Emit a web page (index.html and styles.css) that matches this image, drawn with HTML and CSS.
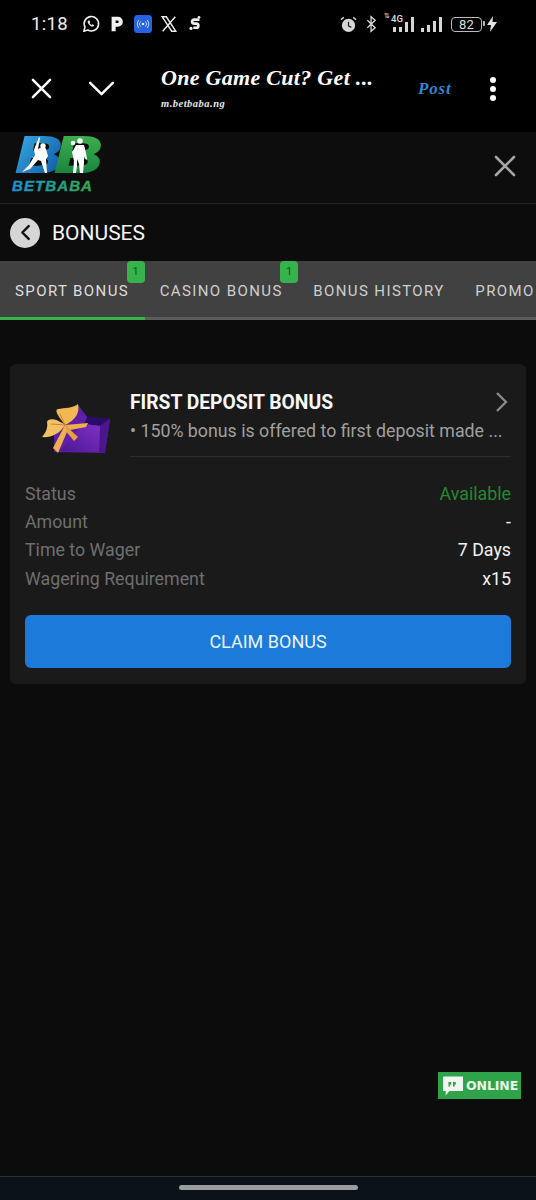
FILE: index.html
```html
<!DOCTYPE html>
<html lang="en">
<head>
<meta charset="utf-8">
<title>Bonuses</title>
<link rel="stylesheet" href="styles.css">
</head>
<body>
<div class="screen">
  <div class="status">
    <span class="time">1:18</span>
    <div class="status-left">
      <svg class="si" viewBox="0 0 20 20"><path d="M2 18l1.300-4.600A8 8 0 1 1 6.500 16.700z" fill="none" stroke="#eee" stroke-width="1.800" stroke-linejoin="round"/><path d="M7 6c-1 .9-.9 2.100.3 3.900 1.300 1.800 2.900 2.900 4.300 3 1 0 1.800-.6 1.900-1.500l-1.900-1.100-.9.9c-1-.5-1.800-1.300-2.300-2.300l.8-.9-.9-2z" fill="#eee"/></svg>
      <svg class="si" viewBox="0 0 20 20"><path d="M4 2h7a5.500 5.500 0 0 1 0 11H8.500v5H4zM8.500 6v3H10.500a1.500 1.500 0 0 0 0-3z" fill="#f2f2f2" fill-rule="evenodd"/></svg>
      <svg class="si si-blue" viewBox="0 0 18 18"><rect width="18" height="18" rx="3.500" fill="#2762e0"/><circle cx="9" cy="9" r="1.300" fill="#cfe"/><path d="M6.500 6.500a3.500 3.500 0 0 0 0 5M11.500 6.500a3.500 3.500 0 0 1 0 5M4.800 5a6 6 0 0 0 0 8M13.200 5a6 6 0 0 1 0 8" fill="none" stroke="#c9d8ff" stroke-width=".9"/></svg>
      <svg class="si" viewBox="0 0 20 20"><path d="M2.500 2h4.500l10.500 16H13zM17 2L3 18" fill="none" stroke="#eee" stroke-width="1.600"/></svg>
      <svg class="si si-s" viewBox="0 0 14 18"><path d="M12 4H6a2.300 2.300 0 0 0 0 4.600h2.500a2.300 2.300 0 0 1 0 4.600H5" fill="none" stroke="#eee" stroke-width="3"/><circle cx="2.500" cy="14" r="1.800" fill="#eee"/><circle cx="11.500" cy="1.500" r="1.500" fill="#eee"/></svg>
    </div>
    <div class="status-right">
      <svg class="sr-alarm" viewBox="0 0 18 18"><circle cx="9" cy="10" r="7" fill="#d8d8d8"/><path d="M9 6v4.500l3 1.500" fill="none" stroke="#222" stroke-width="1.300"/><path d="M1 4l3-2.500M17 4l-3-2.500" stroke="#d8d8d8" stroke-width="1.500"/></svg>
      <svg class="sr-bt" viewBox="0 0 12 18"><path d="M1.500 5l8.500 8-4.500 4V1l4.500 4-8.500 8" fill="none" stroke="#ddd" stroke-width="1.400"/></svg>
      <div class="signal-wrap">
        <span class="updown">⇅</span>
        <span class="four-g">4G</span>
        <span class="bars"><i class="s1"></i><i class="s2"></i><i class="s3"></i><i class="s4"></i></span>
      </div>
      <span class="bars bars-2"><i class="b1"></i><i class="b2"></i><i class="b3"></i><i class="b4"></i></span>
      <span class="battery">82</span>
      <svg class="bolt" viewBox="0 0 10 16"><path d="M6 0L0 9h4l-1 7 7-10H5.500z" fill="#e4e4e4"/></svg>
    </div>
  </div>

  <div class="appbar">
    <svg class="ab-x" viewBox="0 0 22 22"><path d="M2 2l18 18M20 2L2 20" stroke="#fff" stroke-width="2.600" stroke-linecap="round"/></svg>
    <svg class="ab-chev" viewBox="0 0 28 18"><path d="M2 3l12 12L26 3" fill="none" stroke="#fff" stroke-width="2.600" stroke-linecap="round" stroke-linejoin="round"/></svg>
    <div class="ab-title">
      <div class="ab-name">One Game Cut? Get ...</div>
      <div class="ab-url">m.betbaba.ng</div>
    </div>
    <span class="ab-post">Post</span>
    <div class="ab-dots"><i></i><i></i><i></i></div>
  </div>

  <header class="site-head">
    <svg class="logo" viewBox="0 0 90 58">
      <defs>
        <linearGradient id="gb" x1="0" y1="0" x2="1" y2="1"><stop offset="0" stop-color="#39b4ea"/><stop offset="1" stop-color="#0c4d9c"/></linearGradient>
        <linearGradient id="gg" x1="0" y1="0" x2="0" y2="1"><stop offset="0" stop-color="#46b84f"/><stop offset="1" stop-color="#0f7a3c"/></linearGradient>
        <linearGradient id="gt" x1="0" y1="0" x2="1" y2="0"><stop offset="0" stop-color="#1b8fd8"/><stop offset=".45" stop-color="#1f9c96"/><stop offset="1" stop-color="#37a94a"/></linearGradient>
      </defs>
      <text class="logo-b" x="5" y="36" textLength="46" lengthAdjust="spacingAndGlyphs" fill="url(#gb)" stroke="url(#gb)">B</text>
      <text class="logo-b" x="44" y="36" textLength="47" lengthAdjust="spacingAndGlyphs" fill="url(#gg)" stroke="url(#gg)">B</text>
      <g class="players">
        <path d="M24 1l1 1-2 11 6-3 2 3 2 7-2 3 1 14h-2l-4-12-3-1-8 9-8 3 7-7 6-10-1-5 1-3z" fill="#fff"/>
        <circle cx="28" cy="10" r="2.700" fill="#fff"/>
        <circle cx="58" cy="7" r="2.300" fill="#fff"/>
        <circle cx="65" cy="5" r="2.800" fill="#fff"/>
        <path d="M61 9h8l2 8 1 6-1 1-2-4v7l-1 10h-3l-1-9-2-5v7l-1 7h-3l1-12-2-9 2-3z" fill="#fff"/>
      </g>
      <text class="logo-t" x="1" y="55" fill="url(#gt)" stroke="url(#gt)">BETBABA</text>
    </svg>
    <svg class="close" viewBox="0 0 22 22"><path d="M2 2l18 18M20 2L2 20" stroke="#a6a6a6" stroke-width="2.600" stroke-linecap="round"/></svg>
  </header>

  <div class="page-title">
    <span class="back"><svg viewBox="0 0 12 16"><path d="M9 2L3 8l6 6" fill="none" stroke="#111" stroke-width="2.300" stroke-linecap="round" stroke-linejoin="round"/></svg></span>
    <span class="page-name">BONUSES</span>
  </div>

  <nav class="tabs">
    <div class="tab active">SPORT BONUS<span class="badge">1</span></div>
    <div class="tab">CASINO BONUS<span class="badge">1</span></div>
    <div class="tab">BONUS HISTORY</div>
    <div class="tab">PROMO CODE</div>
  </nav>

  <main class="content">
    <section class="card">
      <div class="card-top">
        <svg class="gift" viewBox="0 0 72 58">
          <defs><linearGradient id="gp" x1="0" y1="1" x2="1" y2="0"><stop offset="0" stop-color="#4a1792"/><stop offset="1" stop-color="#7f30c6"/></linearGradient></defs>
          <path d="M14 30L38 3l10 13 22 1-5 34-51-1z" fill="#5f1ea6"/>
          <path d="M48 14l22 3-10 7-16-2z" fill="#2a0c66"/>
          <path d="M60 24l10-7-5 34-6-1z" fill="#4a1690"/>
          <path d="M20 49L44 22l16 2-1 26z" fill="url(#gp)"/>
          <path d="M25 23C18 14 14 8 18 7C24 6 34 6 38 2C40 10 36 18 25 23z" fill="#f2b953"/>
          <path d="M25 23C16 16 8 16 7 20C8 26 6 30 2 35C10 36 20 32 25 23z" fill="#f4c064"/>
          <path d="M25 23L48 21 46 25 30 28z" fill="#eeb04d"/>
          <path d="M25 23L38 35 34 39 24 27z" fill="#e6a240"/>
          <path d="M25 23L27 30 18 51 13 46z" fill="#eeb04d"/>
          <path d="M25 23L20 12M25 23L11 22" stroke="#c7852d" stroke-width="1" fill="none"/>
        </svg>
        <div class="card-info">
          <div class="card-head">
            <h2>FIRST DEPOSIT BONUS</h2>
            <svg class="chev" viewBox="0 0 14 22"><path d="M2 2l9 9-9 9" fill="none" stroke="#8a8a8a" stroke-width="2.300"/></svg>
          </div>
          <p class="desc">• 150% bonus is offered to first deposit made ...</p>
        </div>
      </div>
      <dl class="rows">
        <div class="row"><dt>Status</dt><dd class="ok">Available</dd></div>
        <div class="row"><dt>Amount</dt><dd>-</dd></div>
        <div class="row"><dt>Time to Wager</dt><dd>7 Days</dd></div>
        <div class="row"><dt>Wagering Requirement</dt><dd>x15</dd></div>
      </dl>
      <button class="claim">CLAIM BONUS</button>
    </section>
  </main>

  <div class="online">
    <svg viewBox="0 0 22 21"><path d="M0 0h22v16H7l-4 5v-5H0z" fill="#eef6ee"/><path d="M6 6h3v3H7.500l.5 2H6zM11 6h3v3h-1.500l.5 2H11z" fill="#2fa34a"/></svg>
    <span>ONLINE</span>
  </div>

  <div class="navbar"><span class="pill"></span></div>
</div>
</body>
</html>
```
FILE: styles.css
```css
* { box-sizing: border-box; }
html, body { margin: 0; padding: 0; }
body { background: #0c0c0c; font-family: Roboto, "Liberation Sans", sans-serif; }
.screen { position: relative; width: 536px; height: 1200px; overflow: hidden; display: flex; flex-direction: column; background: #0c0c0c; }

.status { height: 44px; background: #000; display: flex; align-items: center; padding: 4px 39px 0 31px; flex: none; }
.time { color: #eee; font-size: 18.500px; letter-spacing: .3px; width: 51px; }
.status-left { display: flex; align-items: center; gap: 8px; }
.si { width: 18px; height: 18px; display: block; }
.si-s { width: 14px; height: 16px; margin-left: 2px; }
.status-right { margin-left: auto; display: flex; align-items: center; }
.sr-alarm { width: 17px; height: 17px; }
.sr-bt { width: 11px; height: 18px; margin-left: 9px; }
.signal-wrap { position: relative; margin-left: 16px; }
.updown { position: absolute; left: -9px; top: -5px; color: #ddd; font-family: "DejaVu Sans", sans-serif; font-size: 7px; line-height: 9px; }
.four-g { position: absolute; left: -2px; top: -3px; color: #ddd; font-size: 9.500px; line-height: 10px; font-weight: 500; }
.bars { display: flex; align-items: flex-end; gap: 3px; height: 15px; }
.bars i { display: block; width: 3px; background: #d6d6d6; }
.s1 { height: 5px; } .s2 { height: 5px; } .s3 { height: 10px; } .s4 { height: 15px; }
.b1 { height: 4px; } .b2 { height: 7px; } .b3 { height: 11px; } .b4 { height: 15px; }
.bars-2 { margin-left: 7px; }
.battery { position: relative; margin-left: 9px; width: 31px; height: 15px; border: 1.300px solid #bbb; border-radius: 4px; color: #ddd; font-size: 13px; line-height: 13px; text-align: center; letter-spacing: .3px; }
.battery::after { content: ""; position: absolute; right: -3.500px; top: 3.500px; width: 2px; height: 5px; background: #bbb; border-radius: 0 1px 1px 0; }
.bolt { width: 10px; height: 16px; margin-left: 5px; }

.appbar { height: 88px; background: #000; display: flex; align-items: center; flex: none; padding-left: 31px; position: relative; }
.ab-x { width: 21px; height: 21px; }
.ab-chev { width: 27px; height: 17px; margin-left: 36px; }
.ab-title { margin-left: 46px; width: 232px; margin-top: -1px; }
.ab-name { color: #fff; font-family: "Liberation Serif", serif; font-style: italic; font-weight: 700; font-size: 22px; letter-spacing: .3px; line-height: 26px; white-space: nowrap; }
.ab-url { color: #e8e8e8; font-family: "Liberation Serif", serif; font-style: italic; font-weight: 700; font-size: 10.500px; letter-spacing: .5px; line-height: 14px; margin-top: 6px; }
.ab-post { color: #2f87cf; font-family: "Liberation Serif", serif; font-style: italic; font-weight: 700; font-size: 17px; letter-spacing: .8px; margin-left: 25px; margin-top: 2px; }
.ab-dots { margin-left: 39px; margin-top: 2px; display: flex; flex-direction: column; gap: 2.700px; }
.ab-dots i { display: block; width: 6px; height: 6px; border-radius: 50%; background: #fff; }

.site-head { height: 72px; flex: none; display: flex; align-items: flex-start; justify-content: space-between; padding: 4px 20px 0 11px; border-bottom: 1px solid #222; background: #0d0d0d; }
.logo { width: 90px; height: 58px; display: block; overflow: visible; }
.players { transform: translate(4px, 0); }
.logo-b { font-family: "Liberation Sans", sans-serif; font-weight: 700; font-style: italic; font-size: 50px; stroke-width: 2px; }
.logo-t { font-family: "Liberation Sans", sans-serif; font-weight: 700; font-style: italic; font-size: 15px; letter-spacing: 1.100px; stroke-width: .4px; }
.close { width: 22px; height: 22px; margin-top: 19px; }

.page-title { height: 57px; flex: none; display: flex; align-items: center; padding-left: 10px; gap: 12px; }
.back { width: 30px; height: 30px; border-radius: 50%; background: #d6d6d6; display: flex; align-items: center; justify-content: center; }
.back svg { width: 13px; height: 17px; }
.page-name { color: #f4f4f4; font-size: 21px; }

.tabs { height: 59px; flex: none; background: #414141; display: flex; box-shadow: inset 0 -3px 0 #5c5c5c; overflow: hidden; }
.tab { position: relative; flex: none; height: 59px; padding: 20px 15.500px 0 15px; color: #cfcfcf; font-size: 15px; line-height: 20px; letter-spacing: 1.400px; white-space: nowrap; }
.tab.active { color: #dedede; box-shadow: inset 0 -3px 0 #38b24a; }
.badge { position: absolute; right: 0; top: 0; width: 18px; height: 22px; background: #36b34a; border-radius: 4px; color: #1d4d25; font-size: 11px; line-height: 22px; text-align: center; letter-spacing: 0; }

.content { padding: 44px 10px 0 10px; }
.card { background: #1a1a1a; border-radius: 6px; height: 320px; padding: 0 15px; }
.card-top { display: flex; height: 93px; padding-top: 24px; }
.gift { width: 72px; height: 58px; margin: 14px 0 0 15px; flex: none; }
.card-info { margin-left: 18px; flex: 1; height: 69px; border-bottom: 1px solid #2e2e2e; }
.card-head { display: flex; justify-content: space-between; align-items: center; height: 28px; }
.card-head h2 { margin: 0; color: #f8f8f8; font-size: 19.300px; font-weight: 700; }
.chev { width: 14px; height: 22px; margin-right: 2px; }
.desc { margin: 2px 0 0; color: #a0a0a0; font-size: 17.800px; line-height: 26px; white-space: nowrap; }

.rows { margin: 22px 0 0; display: flex; flex-direction: column; font-size: 17.800px; }
.row { display: flex; justify-content: space-between; height: 28.300px; align-items: center; }
.row dt { color: #6f6f6f; }
.row dd { margin: 0; color: #f2f2f2; }
.row dd.ok { color: #26892f; }

.claim { display: block; width: 100%; height: 53px; margin-top: 23px; border: 0; border-radius: 6px; background: #1c7ada; color: #e8f3fd; font-family: inherit; font-size: 18px; }

.online { position: absolute; left: 438px; top: 1072px; width: 83px; height: 27px; background: #2fa34a; display: flex; align-items: center; padding-left: 5px; gap: 3px; }
.online svg { width: 20px; height: 20px; }
.online span { color: #e9f6ea; font-family: "DejaVu Sans", sans-serif; font-weight: 700; font-size: 12.500px; letter-spacing: -.1px; }

.navbar { position: absolute; left: 0; right: 0; bottom: 0; height: 24px; background: #0c1219; border-top: 1px solid #2b2f30; display: flex; justify-content: center; padding-top: 8px; }
.pill { width: 179px; height: 5px; border-radius: 3px; background: #9a9c9e; }
```
